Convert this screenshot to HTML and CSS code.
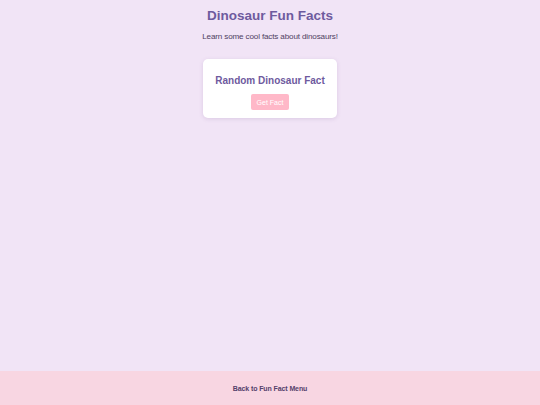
FILE: index.html
```html
<!DOCTYPE html>
<html lang="en">
<head>
<meta charset="utf-8">
<title>Dinosaur Fun Facts</title>
<link rel="stylesheet" href="styles.css">
</head>
<body>
<main class="page">
  <h1 class="title">Dinosaur Fun Facts</h1>
  <p class="subtitle">Learn some cool facts about dinosaurs!</p>
  <section class="card">
    <h2 class="card-title">Random Dinosaur Fact</h2>
    <button class="btn">Get Fact</button>
  </section>
</main>
<footer class="footer">
  <a class="back" href="#">Back to Fun Fact Menu</a>
</footer>
</body>
</html>
```
FILE: styles.css
```css
html, body {
  margin: 0;
  padding: 0;
  height: 100%;
}
body {
  background: #f1e4f6;
  font-family: "Liberation Sans", Arial, sans-serif;
  display: flex;
  flex-direction: column;
  min-height: 100vh;
}
.page {
  flex: 1;
  display: flex;
  flex-direction: column;
  align-items: center;
  padding-top: 7px;
}
.title {
  margin: 0;
  font-size: 13.5px;
  line-height: 18px;
  font-weight: bold;
  color: #6e5a9e;
}
.subtitle {
  margin: 7px 0 0;
  font-size: 8.1px;
  letter-spacing: -0.15px;
  line-height: 10px;
  color: #4f4162;
}
.card {
  margin-top: 17px;
  width: 134px;
  height: 59px;
  box-sizing: border-box;
  background: #fff;
  border-radius: 5px;
  box-shadow: 0 1px 4px rgba(120, 90, 150, 0.18);
  display: flex;
  flex-direction: column;
  align-items: center;
  padding-top: 15px;
}
.card-title {
  margin: 0;
  font-size: 10px;
  line-height: 14px;
  font-weight: bold;
  color: #6e5a9e;
}
.btn {
  margin-top: 6px;
  width: 38px;
  height: 16px;
  padding: 0;
  border: none;
  border-radius: 2px;
  background: #ffb8c8;
  color: #fff;
  font-family: "Liberation Sans", Arial, sans-serif;
  font-size: 7px;
}
.footer {
  height: 34px;
  background: #f8d6e2;
  display: flex;
  align-items: center;
  justify-content: center;
}
.back {
  font-size: 7px;
  letter-spacing: -0.1px;
  font-weight: bold;
  color: #55416b;
  text-decoration: none;
}
```
